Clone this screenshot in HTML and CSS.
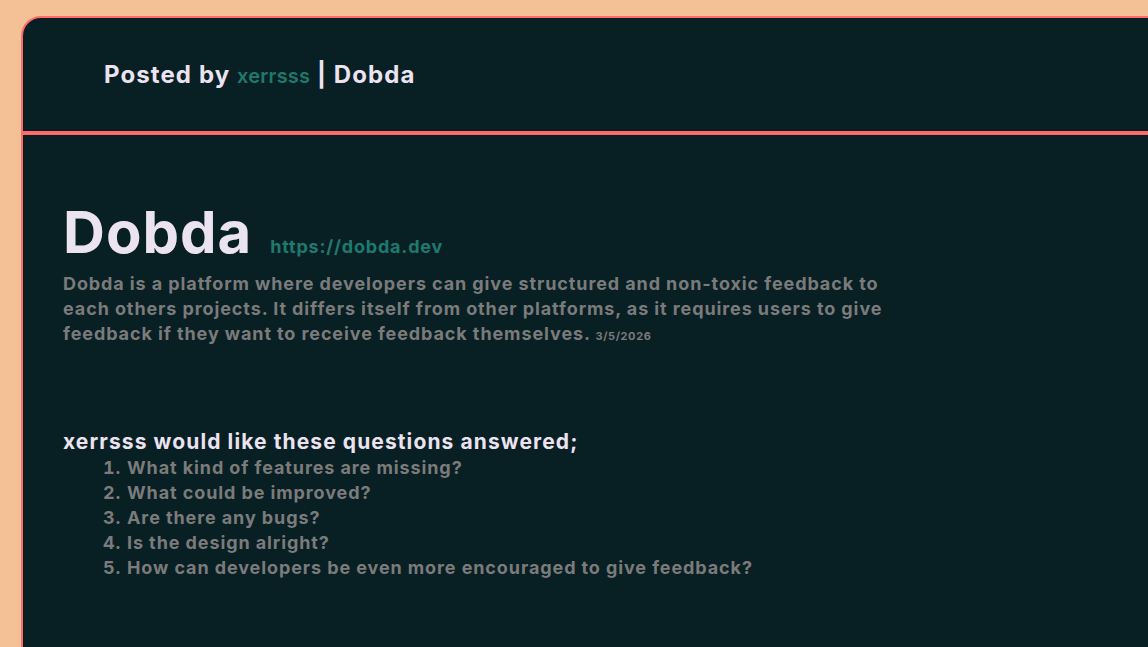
FILE: index.html
```html
<!DOCTYPE html>
<html lang="en">
<head>
<meta charset="utf-8">
<title>Dobda</title>
<link rel="stylesheet" href="styles.css">
</head>
<body>
<div class="card">
  <header class="top">
    <h2 class="posted">Posted by <span class="user">xerrsss</span> | Dobda</h2>
  </header>
  <main class="content">
    <div class="title-row">
      <h1 class="title">Dobda</h1>
      <a class="link" href="#">https://dobda.dev</a>
    </div>
    <p class="desc">Dobda is a platform where developers can give structured and non-toxic feedback to each others projects. It differs itself from other platforms, as it requires users to give feedback if they want to receive feedback themselves. <span class="date">3/5/2026</span></p>
    <h3 class="q-head">xerrsss would like these questions answered;</h3>
    <ol class="questions">
      <li>What kind of features are missing?</li>
      <li>What could be improved?</li>
      <li>Are there any bugs?</li>
      <li>Is the design alright?</li>
      <li>How can developers be even more encouraged to give feedback?</li>
    </ol>
  </main>
</div>
</body>
</html>
```

FILE: styles.css
```css
html, body {
  margin: 0;
  padding: 0;
  height: 100%;
  overflow: hidden;
}
body {
  background: #f4c196;
  font-family: "Inter", "Noto Sans", sans-serif;
}
.card {
  margin: 16px 0 0 21px;
  width: 1200px;
  min-height: 700px;
  background: #081f24;
  border: 2px solid #ff6b6b;
  border-radius: 20px 0 0 0;
}
.top {
  height: 113px;
  display: flex;
  align-items: center;
  padding-left: 81px;
  border-bottom: 4px solid #ff6b6b;
}
.posted {
  margin: 0;
  font-size: 24px;
  font-weight: 700;
  color: #ebe4f0;
  letter-spacing: 1.1px;
}
.user {
  color: #1e7a6e;
  font-size: 20px;
  font-weight: 600;
  letter-spacing: 0.2px;
}
.content {
  padding: 62px 0 0 40px;
}
.title-row {
  display: flex;
  align-items: baseline;
  gap: 18px;
}
.title {
  margin: 0;
  font-size: 58px;
  line-height: 70px;
  font-weight: 700;
  color: #ebe4f0;
  letter-spacing: 1px;
}
.link {
  color: #1e7a6e;
  font-size: 18px;
  font-weight: 700;
  letter-spacing: 0.8px;
  text-decoration: none;
}
.desc {
  margin: 4px 0 0 0;
  width: 840px;
  font-size: 18px;
  line-height: 25px;
  font-weight: 700;
  letter-spacing: 0.9px;
  color: #7b7b7b;
}
.date {
  font-size: 11px;
  letter-spacing: 0.6px;
}
.q-head {
  margin: 79px 0 0 0;
  font-size: 21px;
  line-height: 27px;
  font-weight: 700;
  letter-spacing: 1.1px;
  color: #ebe4f0;
}
.questions {
  margin: 0;
  padding-left: 40px;
  list-style-position: inside;
  font-size: 18px;
  line-height: 25px;
  font-weight: 700;
  letter-spacing: 0.9px;
  color: #7b7b7b;
}
```
